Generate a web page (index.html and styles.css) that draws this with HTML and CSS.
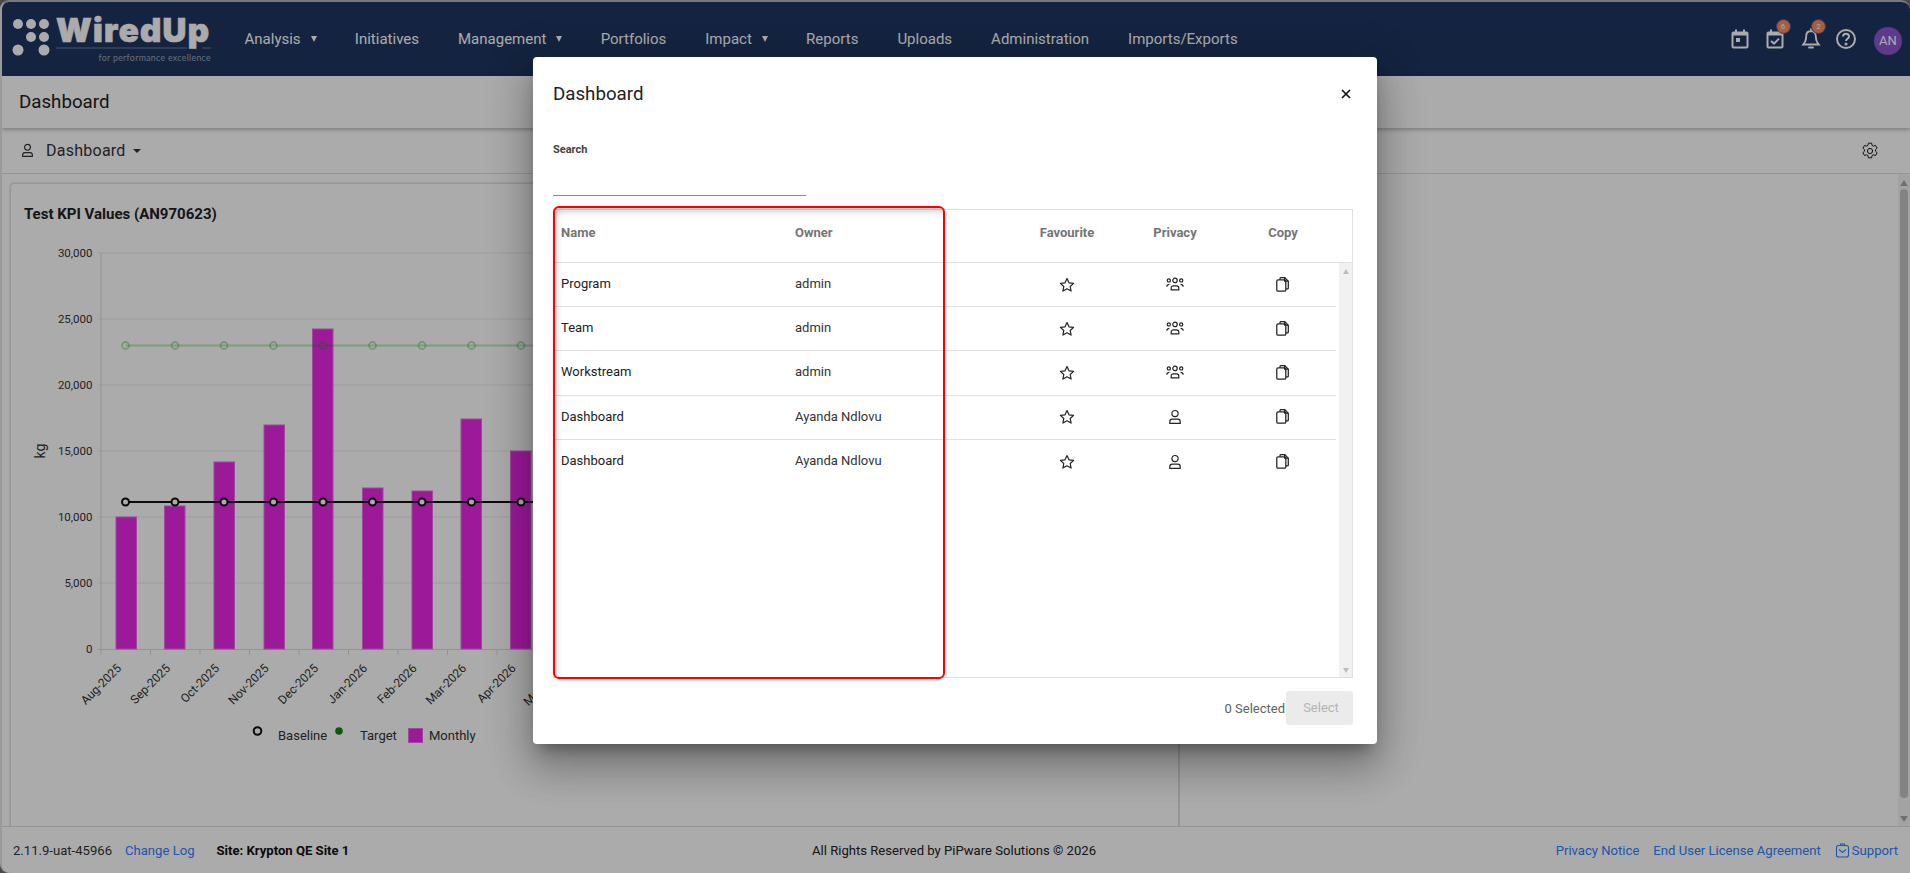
FILE: index.html
```html
<!DOCTYPE html>
<html lang="en">
<head>
<meta charset="utf-8">
<title>Dashboard</title>
<link rel="stylesheet" href="styles.css">
</head>
<body>
<svg class="defs" aria-hidden="true">
  <symbol id="i-star" viewBox="0 0 16 16"><path d="M8 1.6l2 4.2 4.6.6-3.4 3.1.9 4.6L8 11.8l-4.1 2.3.9-4.6L1.4 6.4 6 5.8z" fill="none" stroke="currentColor" stroke-width="1.2" stroke-linejoin="round"/></symbol>
  <symbol id="i-users" viewBox="0 0 18 14"><g fill="none" stroke="currentColor" stroke-width="1.200"><circle cx="9" cy="3.400" r="2.200"/><circle cx="2.800" cy="3.400" r="1.600"/><circle cx="15.200" cy="3.400" r="1.600"/><path d="M5.200 12.800V11a2.200 2.200 0 0 1 2.200-2.200h3.200a2.200 2.200 0 0 1 2.200 2.200v1.800z"/><path d="M.7 9.600c.3-1.500 1.300-2.300 2.700-2.300M17.300 9.600c-.3-1.500-1.300-2.300-2.700-2.300"/></g></symbol>
  <symbol id="i-user" viewBox="0 0 16 16"><g fill="none" stroke="currentColor" stroke-width="1.2"><circle cx="8" cy="4.600" r="3.100"/><path d="M2.800 14.300v-1.600c0-1.500 1-2.500 2.400-2.500h5.600c1.400 0 2.400 1 2.400 2.500v1.600z"/></g></symbol>
  <symbol id="i-copy" viewBox="0 0 13 15"><g fill="none" stroke="currentColor" stroke-width="1.250" stroke-linejoin="round"><path d="M4 2.600V1.600a1 1 0 0 1 1-1h3.800l3.500 3.500v6.800a1 1 0 0 1-1 1H10"/><path d="M8.600.8v3.400h3.500"/><rect x=".8" y="2.800" width="9" height="11.400" rx="1.300"/></g></symbol>
</svg>

<div class="app">
  <header class="nav">
    <div class="logo">
      <svg class="logo-svg" width="224" height="74" viewBox="0 0 224 74">
        <g fill="#fff">
          <circle cx="17" cy="22" r="5"/><circle cx="30" cy="22" r="5"/><circle cx="43" cy="22" r="5"/>
          <circle cx="30" cy="35" r="5"/><circle cx="43" cy="35" r="5"/>
          <circle cx="17" cy="48" r="5.500"/><circle cx="43" cy="48" r="5.500"/>
        </g>
        <text class="logo-word" x="55" y="40">WiredUp</text>
        <path d="M55 46H186M201 46H210" stroke="#6d7da0" stroke-width="1.200"/>
        <text class="logo-tag" x="210" y="58.500" text-anchor="end">for performance excellence</text>
      </svg>
    </div>
    <nav class="menu">
      <a class="menu-item">Analysis<i class="caret"></i></a>
      <a class="menu-item">Initiatives</a>
      <a class="menu-item">Management<i class="caret"></i></a>
      <a class="menu-item">Portfolios</a>
      <a class="menu-item">Impact<i class="caret"></i></a>
      <a class="menu-item">Reports</a>
      <a class="menu-item">Uploads</a>
      <a class="menu-item">Administration</a>
      <a class="menu-item">Imports/Exports</a>
    </nav>
    <div class="tools">
      <span class="tool">
        <svg width="20" height="22" viewBox="0 0 20 22" fill="none" stroke="#fff" stroke-width="2"><rect x="2.500" y="4.500" width="15" height="15" rx="1"/><path d="M2.500 6h15" stroke-width="3"/><path d="M6 1.500v3M14 1.500v3"/><rect x="6" y="10" width="4" height="4" fill="#fff" stroke="none"/></svg>
      </span>
      <span class="tool">
        <svg width="20" height="22" viewBox="0 0 20 22" fill="none" stroke="#fff" stroke-width="2"><rect x="2.500" y="4.500" width="15" height="15" rx="1"/><path d="M2.500 6h15" stroke-width="3"/><path d="M6 1.500v3M14 1.500v3"/><path d="M6 13l3 2.600 5-5"/></svg>
        <b class="badge">6</b>
      </span>
      <span class="tool">
        <svg width="20" height="22" viewBox="0 0 20 22" fill="none" stroke="#fff" stroke-width="1.800"><path d="M10 3c-3.200 0-4.800 2.400-4.800 5.500 0 4-1.200 6-3 8h15.600c-1.800-2-3-4-3-8C14.800 5.400 13.200 3 10 3z"/><path d="M10 1v2M8 19.500h4" stroke-linecap="round"/></svg>
        <b class="badge">2</b>
      </span>
      <span class="tool">
        <svg width="22" height="22" viewBox="0 0 22 22" fill="none" stroke="#fff" stroke-width="2"><circle cx="11" cy="11" r="9"/><path d="M8 8.600c0-1.800 1.300-2.800 3-2.800s3 1 3 2.600c0 2.400-3 2.400-3 4.600"/><circle cx="11" cy="16" r=".6" fill="#fff"/></svg>
      </span>
      <span class="avatar">AN</span>
    </div>
  </header>

  <div class="titlebar">Dashboard</div>

  <div class="subbar">
    <svg class="sub-user"><use href="#i-user"/></svg>
    <span class="sub-name">Dashboard</span>
    <i class="sub-caret"></i>
    <svg class="gear" width="18" height="18" viewBox="0 0 18 18" fill="none" stroke="#1a1a1a" stroke-width="1" stroke-linejoin="round"><path d="M7.400 1.200h3.200l.5 2.200 1.300.7 2.100-.7 1.600 2.800-1.600 1.500v1.500l1.600 1.500-1.600 2.800-2.100-.7-1.300.7-.5 2.300H7.400l-.5-2.300-1.300-.7-2.100.7-1.600-2.800 1.600-1.500V7.700L1.900 6.200l1.600-2.800 2.100.7 1.300-.7z"/><circle cx="9" cy="9" r="2.600"/></svg>
  </div>

  <main class="content">
    <section class="left-pane">
      <article class="card">
        <h2 class="card-title">Test KPI Values (AN970623)</h2>
        <svg class="chart" width="1160" height="530" viewBox="11 230 1160 530">
          <g class="grid">
            <path d="M98 253H1150M98 319H1150M98 385H1150M98 451H1150M98 517H1150M98 583H1150"/>
            <path class="axis" d="M101 253V655M98 649.500H1150"/>
            <path class="axis" d="M150.500 649v6M200 649v6M249.500 649v6M299 649v6M348.500 649v6M398 649v6M447.500 649v6M497 649v6M546.500 649v6"/>
          </g>
          <g class="ylabels">
            <text x="92.500" y="257">30,000</text>
            <text x="92.500" y="323">25,000</text>
            <text x="92.500" y="389">20,000</text>
            <text x="92.500" y="455">15,000</text>
            <text x="92.500" y="521">10,000</text>
            <text x="92.500" y="587">5,000</text>
            <text x="92.500" y="653">0</text>
          </g>
          <text class="ytitle" transform="translate(45 451) rotate(-90)">kg</text>
          <g class="bars">
            <rect x="116" y="517" width="20.500" height="132"/>
            <rect x="164.500" y="506" width="20.500" height="143"/>
            <rect x="214" y="462" width="20.500" height="187"/>
            <rect x="264" y="425" width="20.500" height="224"/>
            <rect x="312.500" y="329" width="20.500" height="320"/>
            <rect x="362.500" y="488" width="20.500" height="161"/>
            <rect x="412" y="491" width="20.500" height="158"/>
            <rect x="461" y="419" width="20.500" height="230"/>
            <rect x="510.500" y="451" width="20.500" height="198"/>
          </g>
          <g class="target">
            <path d="M125.500 345.500H1150"/>
            <circle cx="125.500" cy="345.500" r="3.500"/><circle cx="175" cy="345.500" r="3.500"/><circle cx="224" cy="345.500" r="3.500"/><circle cx="273.500" cy="345.500" r="3.500"/><circle cx="323" cy="345.500" r="3.500"/><circle cx="372.500" cy="345.500" r="3.500"/><circle cx="422" cy="345.500" r="3.500"/><circle cx="471.500" cy="345.500" r="3.500"/><circle cx="521" cy="345.500" r="3.500"/>
          </g>
          <g class="baseline">
            <path d="M125.500 502H1150"/>
            <circle cx="125.500" cy="502" r="3.500"/><circle cx="175" cy="502" r="3.500"/><circle cx="224" cy="502" r="3.500"/><circle cx="273.500" cy="502" r="3.500"/><circle cx="323" cy="502" r="3.500"/><circle cx="372.500" cy="502" r="3.500"/><circle cx="422" cy="502" r="3.500"/><circle cx="471.500" cy="502" r="3.500"/><circle cx="521" cy="502" r="3.500"/>
          </g>
          <g class="xlabels">
            <text transform="translate(122 669) rotate(-45)">Aug-2025</text>
            <text transform="translate(171 669) rotate(-45)">Sep-2025</text>
            <text transform="translate(220 669) rotate(-45)">Oct-2025</text>
            <text transform="translate(269.500 669) rotate(-45)">Nov-2025</text>
            <text transform="translate(319 669) rotate(-45)">Dec-2025</text>
            <text transform="translate(368 669) rotate(-45)">Jan-2026</text>
            <text transform="translate(417.500 669) rotate(-45)">Feb-2026</text>
            <text transform="translate(467 669) rotate(-45)">Mar-2026</text>
            <text transform="translate(516.500 669) rotate(-45)">Apr-2026</text>
            <text transform="translate(566 669) rotate(-45)">May-2026</text>
          </g>
          <g class="legend">
            <circle class="lg-base" cx="257.500" cy="731" r="3.800"/>
            <text x="278" y="740">Baseline</text>
            <circle class="lg-target" cx="339" cy="731" r="3.800"/>
            <text x="360" y="740">Target</text>
            <rect class="lg-bar" x="408.500" y="728.500" width="14" height="14"/>
            <text x="429" y="740">Monthly</text>
          </g>
        </svg>
      </article>
    </section>
    <section class="right-pane"></section>
    <div class="page-scroll"><i class="arrow up"></i><span class="thumb"></span><i class="arrow down"></i></div>
  </main>

  <footer class="foot">
    <div class="foot-left">
      <span>2.11.9-uat-45966</span>
      <a class="link">Change Log</a>
      <strong class="site">Site: Krypton QE Site 1</strong>
    </div>
    <div class="foot-mid">All Rights Reserved by PiPware Solutions © 2026</div>
    <div class="foot-right">
      <a class="link">Privacy Notice</a>
      <a class="link">End User License Agreement</a>
      <a class="link support">
        <svg width="15" height="15" viewBox="0 0 15 15" fill="none" stroke="currentColor" stroke-width="1.100"><rect x="1.500" y="2.500" width="12" height="11.500" rx="2"/><path d="M5.500 2.500V1h4v1.500M4 6.500l3.500 3 3.500-3"/></svg>Support</a>
    </div>
  </footer>
</div>

<div class="backdrop"></div>

<div class="modal">
  <div class="modal-head">
    <h1 class="modal-title">Dashboard</h1>
    <svg class="close" width="10" height="10" viewBox="0 0 10 10" stroke="#111" stroke-width="1.700"><path d="M1 1l8 8M9 1L1 9"/></svg>
  </div>
  <label class="search-label">Search</label>
  <div class="search-input"></div>

  <div class="table">
    <div class="thead">
      <span>Name</span><span>Owner</span><span class="c">Favourite</span><span class="c">Privacy</span><span class="c">Copy</span>
    </div>
    <div class="tbody">
      <div class="rows">
        <div class="row"><span class="name">Program</span><span>admin</span><svg class="ic star"><use href="#i-star"/></svg><svg class="ic users"><use href="#i-users"/></svg><svg class="ic copy"><use href="#i-copy"/></svg></div>
        <div class="row"><span class="name">Team</span><span>admin</span><svg class="ic star"><use href="#i-star"/></svg><svg class="ic users"><use href="#i-users"/></svg><svg class="ic copy"><use href="#i-copy"/></svg></div>
        <div class="row"><span class="name">Workstream</span><span>admin</span><svg class="ic star"><use href="#i-star"/></svg><svg class="ic users"><use href="#i-users"/></svg><svg class="ic copy"><use href="#i-copy"/></svg></div>
        <div class="row"><span class="name">Dashboard</span><span>Ayanda Ndlovu</span><svg class="ic star"><use href="#i-star"/></svg><svg class="ic"><use href="#i-user"/></svg><svg class="ic copy"><use href="#i-copy"/></svg></div>
        <div class="row last"><span class="name">Dashboard</span><span>Ayanda Ndlovu</span><svg class="ic star"><use href="#i-star"/></svg><svg class="ic"><use href="#i-user"/></svg><svg class="ic copy"><use href="#i-copy"/></svg></div>
      </div>
      <div class="tscroll"><i class="arrow up small"></i><i class="arrow down small"></i></div>
    </div>
  </div>

  <div class="modal-foot">
    <span class="selected">0 Selected</span>
    <button class="select-btn" type="button">Select</button>
  </div>

  <div class="annotation"></div>
</div>
</body>
</html>
```
FILE: styles.css
```css
* { box-sizing: border-box; }
html, body { margin: 0; padding: 0; height: 100%; overflow: hidden; background: #6f6f6f; }
body { font-family: Roboto, "Liberation Sans", sans-serif; color: #212121; font-size: 13px; position: relative; }
.defs { width: 0; height: 0; position: absolute; }
.app { height: 873px; display: flex; flex-direction: column; background: #fff; border-top: 2px solid #b5b5b5; border-left: 2px solid #e6e6e6; border-radius: 9px 9px 0 9px; overflow: hidden; }

/* Navigation bar */
.nav { height: 74px; flex: none; display: flex; align-items: center; background: #1e3660; color: #fff; margin-left: -1px; }
.logo { width: 224px; height: 74px; flex: none; }
.logo-svg { display: block; }
.logo-word { font-family: Inter, Roboto, sans-serif; font-weight: 900; font-size: 33px; letter-spacing: 1.300px; fill: #fff; stroke: #fff; stroke-width: .7px; }
.logo-tag { font-family: Lato, Roboto, sans-serif; font-size: 8.800px; letter-spacing: .3px; fill: #9aa6be; }
.menu { display: flex; align-items: center; height: 100%; }
.menu-item { display: flex; align-items: center; padding: 0 19.500px; font-size: 15px; color: #fff; }
.caret { width: 0; height: 0; margin-left: 10px; margin-right: -.75px; border-left: 3.500px solid transparent; border-right: 3.500px solid transparent; border-top: 6px solid #fff; }
.tools { margin-left: auto; display: flex; align-items: center; padding-right: 8px; }
.tool { position: relative; width: 35.500px; display: flex; justify-content: center; }
.badge { position: absolute; top: -9px; left: 18px; width: 15px; height: 15px; border-radius: 50%; background: #f98c5c; border: 1px solid #3d5a9e; color: #fff; font-size: 8px; font-weight: 400; line-height: 13px; text-align: center; }
.avatar { width: 28px; height: 28px; margin-left: 10px; margin-top: 3px; border-radius: 50%; background: #8d57d0; color: #fff; font-size: 13px; line-height: 28px; text-align: center; }

/* Title and sub bars */
.titlebar { height: 52px; flex: none; padding-left: 17px; display: flex; align-items: center; font-size: 18.720px; color: #212121; box-shadow: 0 2px 4px rgba(0,0,0,.25); position: relative; }
.subbar { height: 46px; flex: none; display: flex; align-items: center; padding-left: 18px; border-bottom: 1px solid #e0e0e0; }
.sub-user { width: 15px; height: 15px; color: #333; }
.sub-name { margin-left: 11px; font-size: 16px; color: #333; letter-spacing: .25px; }
.sub-caret { width: 0; height: 0; margin-left: 7px; border-left: 4px solid transparent; border-right: 4px solid transparent; border-top: 4.500px solid #333; }
.gear { margin-left: auto; margin-right: 31px; }

/* Main content */
.content { flex: 1; min-height: 0; display: flex; }
.left-pane { width: 1178px; flex: none; padding: 9px 0 0 8px; border-right: 2px solid #dedede; overflow: hidden; }
.card { height: 700px; border: 1px solid #e0e0e0; border-radius: 4px 0 0 0; border-right: 0; box-shadow: 0 0 2px rgba(0,0,0,.25); }
.card-title { margin: 0; padding: 22px 0 0 13px; height: 46px; font-size: 15px; font-weight: 700; line-height: 17px; color: #212121; }
.chart { display: block; }
.right-pane { flex: 1; }
.page-scroll { width: 12px; flex: none; background: #f4f4f4; display: flex; flex-direction: column; align-items: center; padding: 6px 0 4px; }
.thumb { flex: 1; width: 8px; border-radius: 4px; background: #c4c4c4; margin: 3px 0 18px; }
.arrow { width: 0; height: 0; border-left: 4px solid transparent; border-right: 4px solid transparent; flex: none; }
.arrow.up { border-bottom: 6px solid #a8a8a8; }
.arrow.down { border-top: 6px solid #a8a8a8; }
.arrow.small { border-left-width: 3.500px; border-right-width: 3.500px; }
.arrow.small.up { border-bottom: 5px solid #bdbdbd; }
.arrow.small.down { border-top: 5px solid #bdbdbd; }

/* Chart */
.grid path { fill: none; stroke: #ebebeb; stroke-width: 1; }
.grid path.axis { stroke: #dcdcdc; }
.ylabels text { font-size: 11.500px; text-anchor: end; fill: #333; }
.ytitle { font-size: 14px; fill: #333; text-anchor: middle; }
.bars rect { fill: #e926e6; stroke: #e96fe6; stroke-width: 1; }
.target path { stroke: rgba(0,160,0,.25); stroke-width: 2; }
.target circle { fill: none; stroke: rgba(0,160,0,.3); stroke-width: 1.800; }
.baseline path { stroke: #111; stroke-width: 2; }
.baseline circle { fill: #fff; stroke: #111; stroke-width: 2; }
.xlabels text { font-size: 12px; fill: #333; text-anchor: end; }
.legend text { font-size: 13px; fill: #333; }
.lg-base { fill: #fff; stroke: #111; stroke-width: 2; }
.lg-target { fill: #0d8a0d; }
.lg-bar { fill: #e926e6; stroke: #e96fe6; }

/* Footer */
.foot { height: 47px; flex: none; display: grid; grid-template-columns: 1fr auto 1fr; align-items: center; padding: 0 12px 0 8px; border-top: 1px solid #dedede; font-size: 13.100px; color: #333; }
.foot-left { display: flex; align-items: center; padding-left: 3px; }
.link { color: #2e80ff; }
.foot-left .link { margin-left: 13px; }
.site { margin-left: 22px; color: #111; }
.foot-mid { color: #222; }
.foot-right { display: flex; justify-content: flex-end; align-items: center; }
.foot-right .link { margin-left: 14px; }
.support { display: inline-flex; align-items: center; gap: 2px; }

/* Backdrop and modal */
.backdrop { position: absolute; inset: 0; background: rgba(0,0,0,.33); }
.modal { position: absolute; left: 533px; top: 57px; width: 844px; height: 687px; padding: 25px 24px 0 20px; background: #fff; border-radius: 4px; box-shadow: 0 11px 15px -7px rgba(0,0,0,.35), 0 24px 38px 3px rgba(0,0,0,.2), 0 9px 46px 8px rgba(0,0,0,.14); display: flex; flex-direction: column; }
.modal-head { display: flex; align-items: center; justify-content: space-between; height: 24px; flex: none; }
.modal-title { margin: 0; font-size: 18.720px; font-weight: 400; color: #212121; }
.close { margin-right: 2px; }
.search-label { margin-top: 37px; height: 14px; font-size: 11px; font-weight: 700; line-height: 14px; color: #424242; }
.search-input { width: 253px; height: 39px; flex: none; border-bottom: 1px solid #8a8a8a; }
.table { margin-top: 13px; height: 469px; flex: none; border: 1px solid #e0e0e0; display: flex; flex-direction: column; }
.thead { height: 53px; flex: none; display: grid; grid-template-columns: 233px 226px 108px 108px 108px; padding-top: 15px; border-bottom: 1px solid #e0e0e0; font-weight: 700; color: #757575; font-size: 13px; line-height: 16px; }
.thead span { padding-left: 7px; }
.thead span + span { padding-left: 8px; }
.thead span.c { padding: 0; text-align: center; }
.tbody { flex: 1; display: flex; min-height: 0; }
.rows { width: 782px; flex: none; }
.row { height: 44.200px; display: grid; grid-template-columns: 233px 226px 108px 108px 107px; align-items: center; justify-items: center; border-bottom: 1px solid #e0e0e0; color: #333; }
.row.last { border-bottom: 0; }
.row span { justify-self: start; padding: 0 0 2px 8px; }
.row .name { padding-left: 7px; color: #212121; }
.ic { width: 16px; height: 16px; color: #222; }
.ic.users { width: 18px; height: 14px; margin-bottom: 2px; }
.ic.copy { width: 13px; height: 15px; margin-bottom: 1px; }
.tscroll { margin-left: 3px; flex: 1; background: #f1f1f1; display: flex; flex-direction: column; align-items: center; justify-content: space-between; padding: 6px 0 4px; }
.modal-foot { margin-top: 13px; display: flex; justify-content: flex-end; align-items: center; height: 34px; flex: none; }
.selected { color: #616161; margin-right: 1px; }
.select-btn { width: 67px; height: 34px; padding: 0 0 2px 3px; border: 0; border-radius: 3px; background: #ebebeb; color: #b4b4b4; font: 13px Roboto, sans-serif; }
.annotation { position: absolute; left: 20px; top: 149px; width: 392px; height: 473px; border: 2px solid #f00; border-radius: 6px; box-shadow: inset 3px 5px 7px -2px rgba(0,0,0,.22), 0 1px 4px rgba(0,0,0,.12); pointer-events: none; }
```
